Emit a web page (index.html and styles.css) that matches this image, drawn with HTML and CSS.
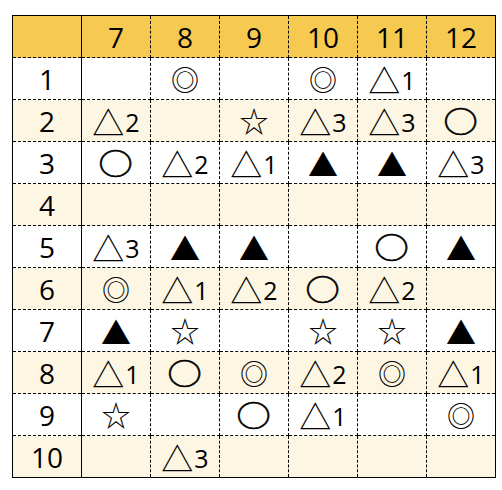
FILE: index.html
```html
<!DOCTYPE html>
<html lang="ja">
<head>
<meta charset="utf-8">
<title>表</title>
<link rel="stylesheet" href="styles.css">
</head>
<body>
<table class="grid">
  <thead>
    <tr><th class="corner"></th><th>7</th><th>8</th><th>9</th><th>10</th><th>11</th><th>12</th></tr>
  </thead>
  <tbody>
    <tr><th>1</th><td></td><td><span class="dc">◎</span></td><td></td><td><span class="dc">◎</span></td><td><span class="tr">△</span><span class="n">1</span></td><td></td></tr>
    <tr class="alt"><th>2</th><td><span class="tr">△</span><span class="n">2</span></td><td></td><td><span class="st">☆</span></td><td><span class="tr">△</span><span class="n">3</span></td><td><span class="tr">△</span><span class="n">3</span></td><td><span class="o">○</span></td></tr>
    <tr><th>3</th><td><span class="o">○</span></td><td><span class="tr">△</span><span class="n">2</span></td><td><span class="tr">△</span><span class="n">1</span></td><td><span class="bt">▲</span></td><td><span class="bt">▲</span></td><td><span class="tr">△</span><span class="n">3</span></td></tr>
    <tr class="alt"><th>4</th><td></td><td></td><td></td><td></td><td></td><td></td></tr>
    <tr><th>5</th><td><span class="tr">△</span><span class="n">3</span></td><td><span class="bt">▲</span></td><td><span class="bt">▲</span></td><td></td><td><span class="o">○</span></td><td><span class="bt">▲</span></td></tr>
    <tr class="alt"><th>6</th><td><span class="dc">◎</span></td><td><span class="tr">△</span><span class="n">1</span></td><td><span class="tr">△</span><span class="n">2</span></td><td><span class="o">○</span></td><td><span class="tr">△</span><span class="n">2</span></td><td></td></tr>
    <tr><th>7</th><td><span class="bt">▲</span></td><td><span class="st">☆</span></td><td></td><td><span class="st">☆</span></td><td><span class="st">☆</span></td><td><span class="bt">▲</span></td></tr>
    <tr class="alt"><th>8</th><td><span class="tr">△</span><span class="n">1</span></td><td><span class="o">○</span></td><td><span class="dc">◎</span></td><td><span class="tr">△</span><span class="n">2</span></td><td><span class="dc">◎</span></td><td><span class="tr">△</span><span class="n">1</span></td></tr>
    <tr><th>9</th><td><span class="st">☆</span></td><td></td><td><span class="o">○</span></td><td><span class="tr">△</span><span class="n">1</span></td><td></td><td><span class="dc">◎</span></td></tr>
    <tr class="alt"><th>10</th><td></td><td><span class="tr">△</span><span class="n">3</span></td><td></td><td></td><td></td><td></td></tr>
  </tbody>
</table>
</body>
</html>
```
FILE: styles.css
```css
html, body {
  margin: 0;
  background: #ffffff;
}
body {
  padding: 15px 0 0 12px;
  font-family: "Noto Sans CJK JP", "Open Sans", sans-serif;
  color: #000;
}
.grid {
  border-collapse: collapse;
  table-layout: fixed;
  border: 1px solid #000;
}
.grid th, .grid td {
  width: 68px;
  height: 41px;
  padding: 0;
  text-align: center;
  vertical-align: middle;
  border: 1px dashed #000;
  line-height: 1;
  white-space: nowrap;
}
.grid th {
  font-family: "Open Sans", "Noto Sans", sans-serif;
  font-weight: normal;
  font-size: 28px;
}
.grid td {
  font-size: 24px;
}
.grid tbody th {
  border-right: 1px solid #000;
}
.grid thead th {
  background: #f6ca50;
}
.grid thead th.corner {
  border-right: 1px solid #000;
}
.grid tr.alt th, .grid tr.alt td {
  background: #fdf6e3;
}
.grid tr > :first-child {
  border-left: 1px solid #000;
}
.grid tr > :last-child {
  border-right: 1px solid #000;
}
.grid thead th {
  border-top: 1px solid #000;
}
.grid tbody tr:last-child > * {
  border-bottom: 1px solid #000;
}
.tr {
  font-size: 32px;
  vertical-align: -1px;
}
.n {
  font-family: "Open Sans", sans-serif;
  font-size: 25px;
  vertical-align: 2px;
  margin-left: 1px;
}
.dc {
  font-size: 28px;
}
.st {
  font-size: 29px;
}
.bt {
  font-size: 30px;
}
.o {
  display: inline-block;
  font-size: 29px;
  transform: scaleX(1.18);
  -webkit-text-stroke: 0.6px #000;
}
```
